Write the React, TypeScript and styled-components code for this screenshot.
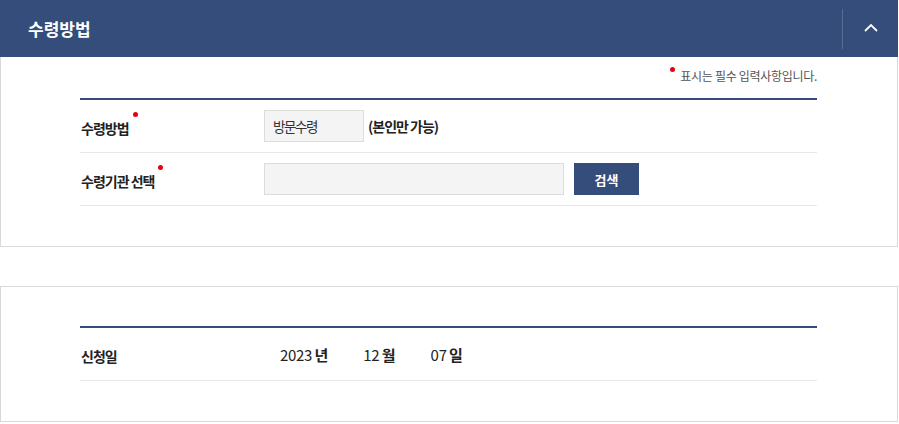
import styled, { createGlobalStyle } from "styled-components";

const navy = "#344d7a";

const GlobalStyle = createGlobalStyle`
    body {
        margin: 0;
        background: #fff;
        font-family: "Noto Sans CJK KR", "Noto Sans", sans-serif;
        color: #222;
    }
`

const Required = () => <Dot aria-hidden="true" />

export default function App() {
    return (
        <Page>
            <GlobalStyle />
            <Section>
                <SectionHeader>
                    <SectionTitle>수령방법</SectionTitle>
                    <ToggleButton type="button" aria-label="접기">
                        <svg width="14" height="9" viewBox="0 0 14 9">
                            <polyline points="1,8 7,2 13,8" fill="none" stroke="#fff" strokeWidth="1.8" />
                        </svg>
                    </ToggleButton>
                </SectionHeader>
                <Panel>
                    <Note><Required />표시는 필수 입력사항입니다.</Note>
                    <Table>
                        <Row>
                            <Label>수령방법<Required /></Label>
                            <Value>
                                <ReadonlyBox>방문수령</ReadonlyBox>
                                <Strong>(본인만 가능)</Strong>
                            </Value>
                        </Row>
                        <Row>
                            <Label>수령기관 선택<Required /></Label>
                            <Value>
                                <TextInput readOnly />
                                <SearchButton type="button">검색</SearchButton>
                            </Value>
                        </Row>
                    </Table>
                </Panel>
            </Section>

            <Panel $boxed>
                <Table>
                    <Row>
                        <Label>신청일</Label>
                        <Value $indent>
                            <DatePart>2023<Strong> 년</Strong></DatePart>
                            <DatePart>12<Strong> 월</Strong></DatePart>
                            <DatePart>07<Strong> 일</Strong></DatePart>
                        </Value>
                    </Row>
                </Table>
            </Panel>
        </Page>
    )
}

const Page = styled.div`
    width: 898px;
    display: flex;
    flex-direction: column;
    gap: 39px;
`

const Section = styled.section`
    display: flex;
    flex-direction: column;
`

const SectionHeader = styled.header`
    height: 57px;
    background: ${navy};
    display: flex;
    align-items: center;
    justify-content: space-between;
    padding-left: 28px;
`

const SectionTitle = styled.h2`
    margin: 0;
    color: #fff;
    font-size: 17px;
    font-weight: 700;
    letter-spacing: 0;
`

const ToggleButton = styled.button`
    width: 56px;
    height: 40px;
    border: 0;
    border-left: 1px solid rgba(255, 255, 255, 0.18);
    background: transparent;
    display: flex;
    align-items: center;
    justify-content: center;
    padding: 0 0 3px 0;
    cursor: pointer;
`

const Panel = styled.div<{ $boxed?: boolean }>`
    border: 1px solid #d9d9d9;
    border-top: ${p => p.$boxed ? "1px solid #d9d9d9" : "0"};
    padding: ${p => p.$boxed ? "39px" : "0"} 80px 40px 79px;
`

const Note = styled.p`
    margin: 10px 0 13px;
    text-align: right;
    font-size: 12px;
    line-height: 18px;
    color: #555;
    letter-spacing: -0.3px;
`

const Dot = styled.span`
    display: inline-block;
    width: 5px;
    height: 5px;
    border-radius: 50%;
    background: #e60012;
    vertical-align: top;
    margin: 0 5px 0 0;
`

const Table = styled.div`
    border-top: 2px solid ${navy};
`

const Row = styled.div`
    display: flex;
    align-items: center;
    min-height: 52px;
    border-bottom: 1px solid #e8e8e8;
`

const Label = styled.div`
    width: 183px;
    padding-left: 1px;
    font-size: 14px;
    font-weight: 700;
    letter-spacing: -1px;
    color: #222;
    display: flex;
    align-items: flex-start;
    line-height: 20px;
    padding-top: 4px;

    ${Dot} {
        margin: -6px 0 0 4px;
    }
`

const Value = styled.div<{ $indent?: boolean }>`
    display: flex;
    align-items: center;
    gap: ${p => p.$indent ? "36px" : "4px"};
    padding-left: ${p => p.$indent ? "16px" : "0"};
    font-size: 14px;
    color: #222;
`

const ReadonlyBox = styled.div`
    width: 100px;
    height: 32px;
    box-sizing: border-box;
    border: 1px solid #dcdcdc;
    background: #f4f4f4;
    padding-left: 8px;
    display: flex;
    align-items: center;
    font-size: 13.5px;
    letter-spacing: -1.4px;
    color: #333;
`

const Strong = styled.strong`
    font-weight: 700;
    letter-spacing: -1px;
`

const TextInput = styled.input`
    width: 300px;
    height: 32px;
    box-sizing: border-box;
    border: 1px solid #dcdcdc;
    background: #f4f4f4;
    margin-right: 6px;
`

const SearchButton = styled.button`
    width: 65px;
    height: 32px;
    border: 0;
    background: ${navy};
    color: #fff;
    font-family: inherit;
    font-size: 13px;
    font-weight: 700;
    cursor: pointer;
`

const DatePart = styled.span`
    font-size: 15px;
    letter-spacing: -0.3px;
`
